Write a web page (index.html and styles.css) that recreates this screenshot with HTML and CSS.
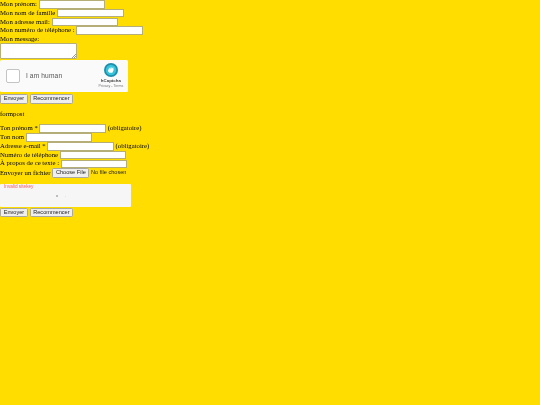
FILE: index.html
```html
<!DOCTYPE html>
<html lang="fr">
<head>
<meta charset="utf-8">
<title>Formulaire</title>
<link rel="stylesheet" href="styles.css">
</head>
<body>
<form class="form">
  <label class="row"><span>Mon prénom:</span><input type="text"></label>
  <label class="row"><span>Mon nom de famille</span><input type="text"></label>
  <label class="row"><span>Mon adresse mail:</span><input type="text"></label>
  <label class="row"><span>Mon numéro de téléphone :</span><input type="text"></label>
  <label class="row short"><span>Mon message:</span></label>
  <textarea class="message"></textarea>
  <div class="captcha">
    <span class="check"></span>
    <span class="human">I am human</span>
    <div class="brand">
      <svg class="logo" viewBox="0 0 32 32" aria-hidden="true">
        <circle cx="16" cy="16" r="16" fill="#1c8fae"/>
        <circle cx="16" cy="16" r="12" fill="#37c4d8"/>
        <path d="M9 18l3-8 2 4 2-6 2 5 3-4 1 7-3 6h-7z" fill="#fff"/>
      </svg>
      <span class="name">hCaptcha</span>
      <span class="links">Privacy - Terms</span>
    </div>
  </div>
  <div class="buttons">
    <input class="btn" type="submit" value="Envoyer">
    <input class="btn" type="reset" value="Recommencer">
  </div>
</form>
<p class="title">formpost</p>
<form class="form">
  <label class="row"><span>Ton prénom *</span><input type="text"><span>(obligatoire)</span></label>
  <label class="row"><span>Ton nom</span><input type="text"></label>
  <label class="row"><span>Adresse e-mail *</span><input type="text"><span>(obligatoire)</span></label>
  <label class="row"><span>Numéro de téléphone</span><input type="text"></label>
  <label class="row"><span>À propos de ce texte :</span><input type="text"></label>
  <label class="row file-row"><span>Envoyer un fichier</span><input type="file"></label>
  <div class="invalid">
    <span class="error">Invalid sitekey</span>
    <span class="dots"><i></i><i></i></span>
  </div>
  <div class="buttons tight">
    <input class="btn" type="submit" value="Envoyer">
    <input class="btn" type="reset" value="Recommencer">
  </div>
</form>
</body>
</html>
```
FILE: styles.css
```css
html {
  background: #ffdd00;
}
body {
  margin: 0;
  font-family: "Liberation Serif", serif;
  font-size: 6.75px;
  line-height: 8.8px;
  color: #000;
  filter: blur(0.25px);
}
.row {
  display: flex;
  align-items: center;
  gap: 1.7px;
  height: 8.8px;
}
.row.short {
  height: 8px;
}
.row.file-row {
  height: 9.8px;
}
.row input[type="text"] {
  box-sizing: border-box;
  width: 66.5px;
  height: 8.6px;
  margin: 0;
  padding: 0;
  background: #fff;
  border: 1px solid #b5ae78;
  border-radius: 0;
}
.message {
  display: block;
  box-sizing: border-box;
  width: 76.5px;
  height: 15.5px;
  margin: 0;
  padding: 0;
  resize: none;
  border: 1px solid #b5ae78;
  border-radius: 1px;
  background: #fff linear-gradient(135deg, transparent 50%, #999 50% 60%, transparent 60% 75%, #999 75% 85%, transparent 85%) right bottom / 4px 4px no-repeat;
}
.captcha {
  display: flex;
  align-items: center;
  box-sizing: border-box;
  width: 127.5px;
  height: 31.6px;
  margin-top: 1.6px;
  background: #fafafa;
  border-radius: 1.5px;
  font-family: "Liberation Sans", sans-serif;
}
.check {
  box-sizing: border-box;
  width: 13.6px;
  height: 13.6px;
  margin-left: 6.3px;
  background: #fff;
  border: 1px solid #c4c4c4;
  border-radius: 2px;
}
.human {
  margin-left: 6px;
  font-size: 6.6px;
  letter-spacing: 0.15px;
  color: #555;
}
.brand {
  display: flex;
  flex-direction: column;
  align-items: center;
  margin-left: auto;
  margin-right: 4.3px;
  line-height: 5px;
}
.logo {
  display: block;
  width: 14px;
  height: 14px;
  margin-bottom: 1px;
}
.name {
  font-size: 4.4px;
  font-weight: bold;
  color: #444;
}
.links {
  margin-top: 0.6px;
  font-size: 3.6px;
  color: #777;
}
.buttons {
  display: flex;
  gap: 2.2px;
  margin-top: 2.4px;
  padding-left: 0.3px;
}
.buttons.tight {
  margin-top: 0.7px;
}
.btn,
input[type="file"]::file-selector-button {
  box-sizing: border-box;
  height: 9.4px;
  margin: 0;
  padding: 0 2.4px;
  font-family: "Liberation Sans", sans-serif;
  font-size: 5.6px;
  line-height: 1;
  color: #222;
  background: #efefef;
  border: 1px solid #a8a8a0;
  border-radius: 1.3px;
}
input[type="file"] {
  margin: 0;
  padding: 0;
  font-family: "Liberation Sans", sans-serif;
  font-size: 5.6px;
  color: #222;
}
input[type="file"]::file-selector-button {
  padding: 0 2.6px;
  margin-right: 1.7px;
}
.title {
  margin: 6px 0 5.8px;
}
.invalid {
  display: flex;
  flex-direction: column;
  box-sizing: border-box;
  width: 130.7px;
  height: 22.7px;
  margin-top: 6.3px;
  background: #f6f6f6;
  border-radius: 1px;
  font-family: "Liberation Sans", sans-serif;
}
.error {
  margin-left: 4px;
  font-size: 4.7px;
  line-height: 6px;
  color: #f0606a;
}
.dots {
  display: flex;
  justify-content: center;
  align-items: center;
  gap: 7px;
  margin-top: 5px;
  padding-right: 8px;
}
.dots i {
  width: 2px;
  height: 2px;
  border-radius: 50%;
  background: #aaa;
}
.dots i + i {
  width: 1px;
  height: 1px;
  background: #ddd;
}
```
